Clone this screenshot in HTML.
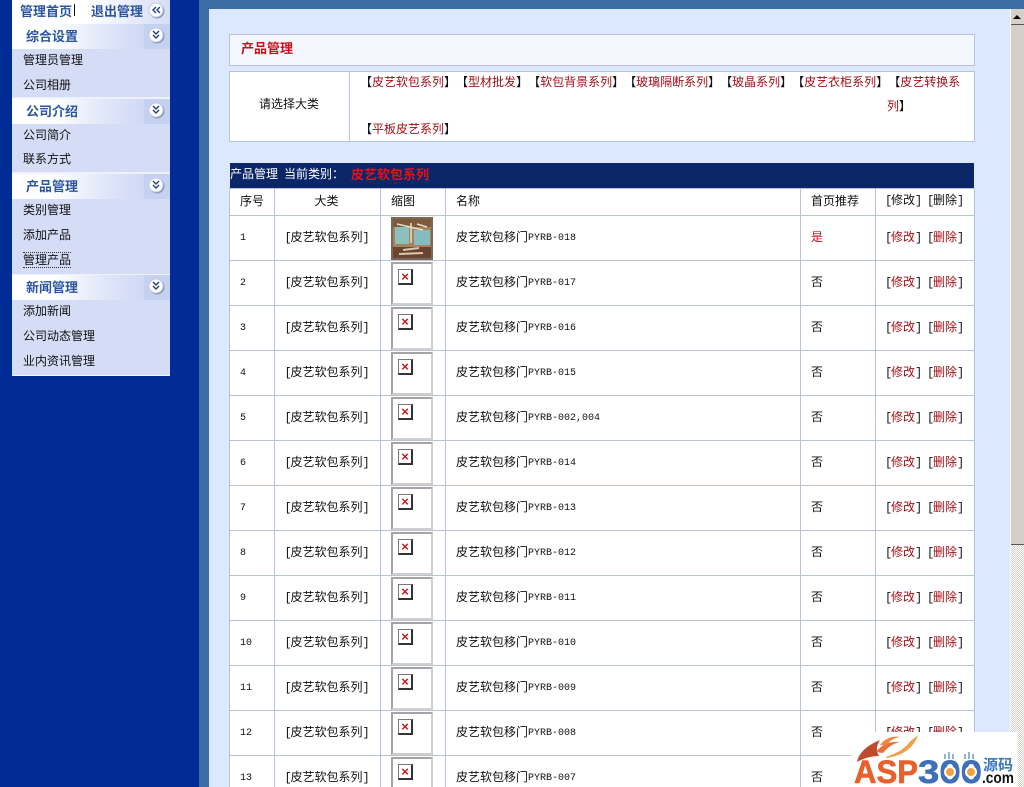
<!DOCTYPE html>
<html><head><meta charset="utf-8">
<style>
html,body{margin:0;padding:0;width:1024px;height:787px;overflow:hidden;background:#012c95;}
body{position:relative;font:12px/14px "WenQuanYi Zen Hei","Noto Sans CJK SC",sans-serif;color:#111;text-spacing-trim:space-all;}
.a{position:absolute;white-space:nowrap;}
.r{color:#a01018;}
u{font:10px/14px "Liberation Mono",monospace;text-decoration:none;white-space:pre;}
i{font:12px/14px "Liberation Mono",monospace;display:inline-block;width:6px;text-align:center;color:#111;}
.bd{font:bold 13px/15px "Noto Sans CJK SC",sans-serif;}
.h{position:absolute;left:12px;width:158px;height:25px;background:linear-gradient(90deg,#fff 0,#fff 40px,#dfe6f9 95px,#d5ddf6 120px,#cfd9f5 132px,#c5d1f1 132px,#c5d1f1 158px);}
.h b{position:absolute;left:14px;top:4px;font:bold 13px/15px "Noto Sans CJK SC",sans-serif;color:#2b569f;}
.h svg{position:absolute;left:136px;top:3px;}
.m{position:absolute;left:12px;width:158px;background:#d5ddf6;}
.m span{position:absolute;left:11px;white-space:nowrap;}
table{position:absolute;left:229px;top:188px;width:746px;table-layout:fixed;border-collapse:collapse;background:#fff;}
td{border:1px solid #b9c1dc;padding:0 0 2px 10px;height:42px;white-space:nowrap;overflow:hidden;}
tr.t td{height:24px;}
td.c{text-align:center;padding:0 2px 2px 0;}
td.p{padding:0;}
td:nth-child(6){padding-left:9px;}
tr:not(.t) td:nth-child(4),tr:not(.t) td:nth-child(6){padding-top:2px;padding-bottom:2px;height:40px;}
tr:not(.t) td:nth-child(4) u{position:relative;top:-1px;}
.th{position:relative;width:38px;height:39px;border:2px solid #cfcfcf;border-top-color:#a4a4a4;border-left-color:#a4a4a4;margin-left:10px;background:#fff;}
.x{position:absolute;left:5px;top:5px;width:12px;height:13px;border:1px solid #777;border-right:2px solid #333;border-bottom:2px solid #333;background:#fff;}
.x:after{content:"×";position:absolute;left:0;top:0;width:12px;text-align:center;color:#c4141c;font:bold 13px/13px "Liberation Sans",sans-serif;}
</style></head><body>

<div class="a" style="left:199px;top:0;width:825px;height:787px;background:#3a6ea5;"></div>
<div class="a" style="left:209px;top:9px;width:802px;height:778px;background:#dce8fd;"></div>
<div class="a" style="left:1010px;top:9px;width:1px;height:778px;background:#f4f6fa;"></div>

<!-- scrollbar -->
<div class="a" style="left:1011px;top:9px;width:13px;height:535px;background:#d4d0c8;"></div>
<div class="a" style="left:1011px;top:544px;width:13px;height:1px;background:#555;"></div>
<div class="a" style="left:1011px;top:545px;width:13px;height:242px;background:repeating-conic-gradient(#d4d0c8 0 25%,#fff 0 50%) 0 0/2px 2px;"></div>
<div class="a" style="left:1011px;top:9px;width:13px;height:15px;background:#d4d0c8;border-bottom:1px solid #555;"></div>
<div class="a" style="left:1013px;top:15px;width:0;height:0;border:4px solid transparent;border-top:0;border-bottom:4px solid #000;"></div>

<!-- sidebar -->
<div class="a" style="left:12px;top:0;width:158px;height:24px;background:linear-gradient(90deg,#fff 0,#fff 75px,#d5ddf6 158px);"></div>
<div class="a bd" style="left:20px;top:3px;color:#2b569f;">管理首页</div>
<div class="a" style="left:74px;top:4px;width:1px;height:12px;background:#111;"></div>
<div class="a bd" style="left:91px;top:3px;color:#2b569f;">退出管理</div>
<svg class="a" style="left:148px;top:2px;" width="18" height="18"><circle cx="9" cy="9" r="7.5" fill="#8c94ae"/><circle cx="8" cy="8" r="7" fill="#fff" stroke="#c3cbe2"/><path d="M8 5L5 8L8 11M12 5L9 8L12 11" fill="none" stroke="#23407f" stroke-width="1.4"/></svg>

<div class="h" style="top:24px;"><b>综合设置</b><svg width="18" height="18"><circle cx="9" cy="9" r="7.5" fill="#8c94ae"/><circle cx="8" cy="8" r="7" fill="#fff" stroke="#c3cbe2"/><path d="M5 4L8 7L11 4M5 8L8 11L11 8" fill="none" stroke="#23407f" stroke-width="1.4"/></svg></div>
<div class="m" style="top:49px;height:48px;"><span style="top:4px;">管理员管理</span><span style="top:29px;">公司相册</span></div>
<div class="a" style="left:12px;top:97px;width:158px;height:2px;background:#eef2fc;"></div>
<div class="h" style="top:99px;"><b>公司介绍</b><svg width="18" height="18"><circle cx="9" cy="9" r="7.5" fill="#8c94ae"/><circle cx="8" cy="8" r="7" fill="#fff" stroke="#c3cbe2"/><path d="M5 4L8 7L11 4M5 8L8 11L11 8" fill="none" stroke="#23407f" stroke-width="1.4"/></svg></div>
<div class="m" style="top:124px;height:48px;"><span style="top:4px;">公司简介</span><span style="top:28px;">联系方式</span></div>
<div class="a" style="left:12px;top:172px;width:158px;height:2px;background:#eef2fc;"></div>
<div class="h" style="top:174px;"><b>产品管理</b><svg width="18" height="18"><circle cx="9" cy="9" r="7.5" fill="#8c94ae"/><circle cx="8" cy="8" r="7" fill="#fff" stroke="#c3cbe2"/><path d="M5 4L8 7L11 4M5 8L8 11L11 8" fill="none" stroke="#23407f" stroke-width="1.4"/></svg></div>
<div class="m" style="top:199px;height:75px;"><span style="top:4px;">类别管理</span><span style="top:29px;">添加产品</span><span style="top:54px;border-top:1px dotted #333;border-bottom:1px dotted #333;margin-top:-1px;">管理产品</span></div>
<div class="a" style="left:12px;top:274px;width:158px;height:1px;background:#eef2fc;"></div>
<div class="h" style="top:275px;"><b>新闻管理</b><svg width="18" height="18"><circle cx="9" cy="9" r="7.5" fill="#8c94ae"/><circle cx="8" cy="8" r="7" fill="#fff" stroke="#c3cbe2"/><path d="M5 4L8 7L11 4M5 8L8 11L11 8" fill="none" stroke="#23407f" stroke-width="1.4"/></svg></div>
<div class="m" style="top:300px;height:75px;"><span style="top:4px;">添加新闻</span><span style="top:29px;">公司动态管理</span><span style="top:54px;">业内资讯管理</span></div>
<div class="a" style="left:12px;top:375px;width:158px;height:1px;background:#f2f5fd;"></div>

<!-- title -->
<div class="a" style="left:229px;top:34px;width:744px;height:30px;background:#f5f7fe;border:1px solid #b9c1dc;"></div>
<div class="a bd" style="left:241px;top:40px;color:#c8101a;">产品管理</div>

<!-- category box -->
<div class="a" style="left:229px;top:71px;width:744px;height:69px;background:#fff;border:1px solid #b9c1dc;"></div>
<div class="a" style="left:349px;top:72px;width:1px;height:69px;background:#b9c1dc;"></div>
<div class="a" style="left:259px;top:97px;">请选择大类</div>
<div class="a" style="left:360px;top:75px;">【<span class="r">皮艺软包系列</span>】【<span class="r">型材批发</span>】【<span class="r">软包背景系列</span>】【<span class="r">玻璃隔断系列</span>】【<span class="r">玻晶系列</span>】【<span class="r">皮艺衣柜系列</span>】【<span class="r">皮艺转换系</span></div>
<div class="a" style="left:887px;top:99px;"><span class="r">列</span>】</div>
<div class="a" style="left:360px;top:122px;">【<span class="r">平板皮艺系列</span>】</div>

<!-- dark bar -->
<div class="a" style="left:230px;top:163px;width:744px;height:25px;background:#0b2669;"></div>
<div class="a" style="left:230px;top:167px;color:#fff;">产品管理<u> </u>当前类别：</div>
<div class="a bd" style="left:351px;top:166px;color:#e01218;">皮艺软包系列</div>

<table>
<colgroup><col style="width:45px"><col style="width:106px"><col style="width:65px"><col style="width:355px"><col style="width:75px"><col style="width:99px"></colgroup>
<tr class="t"><td>序号</td><td class="c">大类</td><td>缩图</td><td>名称</td><td>首页推荐</td><td><i>[</i>修改<i>]</i><u> </u><i>[</i>删除<i>]</i></td></tr>
<tr><td><u>1</u></td><td class="c"><i>[</i>皮艺软包系列<i>]</i></td><td class="p"><div class="th" style="border-color:#7a6a55;overflow:hidden;"><svg width="38" height="39" style="display:block"><rect width="38" height="39" fill="#a6835e"/><rect width="38" height="8" fill="#7d5a3c"/><rect x="2" y="8" width="14" height="17" fill="#8cc0bc"/><rect x="21" y="11" width="16" height="15" fill="#86bcc0"/><path d="M4 5L30 11M18 4V24M24 5L34 8" stroke="#e6dcc8" stroke-width="1.5"/><rect y="28" width="38" height="11" fill="#6a4630"/><path d="M10 31L26 29M6 35L30 34" stroke="#d8c8b0" stroke-width="2"/></svg></div></td><td>皮艺软包移门<u>PYRB-018</u></td><td style="color:#c8101a">是</td><td><i>[</i><span class="r">修改</span><i>]</i><u> </u><i>[</i><span class="r">删除</span><i>]</i></td></tr>
<tr><td><u>2</u></td><td class="c"><i>[</i>皮艺软包系列<i>]</i></td><td class="p"><div class="th"><div class="x"></div></div></td><td>皮艺软包移门<u>PYRB-017</u></td><td>否</td><td><i>[</i><span class="r">修改</span><i>]</i><u> </u><i>[</i><span class="r">删除</span><i>]</i></td></tr>
<tr><td><u>3</u></td><td class="c"><i>[</i>皮艺软包系列<i>]</i></td><td class="p"><div class="th"><div class="x"></div></div></td><td>皮艺软包移门<u>PYRB-016</u></td><td>否</td><td><i>[</i><span class="r">修改</span><i>]</i><u> </u><i>[</i><span class="r">删除</span><i>]</i></td></tr>
<tr><td><u>4</u></td><td class="c"><i>[</i>皮艺软包系列<i>]</i></td><td class="p"><div class="th"><div class="x"></div></div></td><td>皮艺软包移门<u>PYRB-015</u></td><td>否</td><td><i>[</i><span class="r">修改</span><i>]</i><u> </u><i>[</i><span class="r">删除</span><i>]</i></td></tr>
<tr><td><u>5</u></td><td class="c"><i>[</i>皮艺软包系列<i>]</i></td><td class="p"><div class="th"><div class="x"></div></div></td><td>皮艺软包移门<u>PYRB-002,004</u></td><td>否</td><td><i>[</i><span class="r">修改</span><i>]</i><u> </u><i>[</i><span class="r">删除</span><i>]</i></td></tr>
<tr><td><u>6</u></td><td class="c"><i>[</i>皮艺软包系列<i>]</i></td><td class="p"><div class="th"><div class="x"></div></div></td><td>皮艺软包移门<u>PYRB-014</u></td><td>否</td><td><i>[</i><span class="r">修改</span><i>]</i><u> </u><i>[</i><span class="r">删除</span><i>]</i></td></tr>
<tr><td><u>7</u></td><td class="c"><i>[</i>皮艺软包系列<i>]</i></td><td class="p"><div class="th"><div class="x"></div></div></td><td>皮艺软包移门<u>PYRB-013</u></td><td>否</td><td><i>[</i><span class="r">修改</span><i>]</i><u> </u><i>[</i><span class="r">删除</span><i>]</i></td></tr>
<tr><td><u>8</u></td><td class="c"><i>[</i>皮艺软包系列<i>]</i></td><td class="p"><div class="th"><div class="x"></div></div></td><td>皮艺软包移门<u>PYRB-012</u></td><td>否</td><td><i>[</i><span class="r">修改</span><i>]</i><u> </u><i>[</i><span class="r">删除</span><i>]</i></td></tr>
<tr><td><u>9</u></td><td class="c"><i>[</i>皮艺软包系列<i>]</i></td><td class="p"><div class="th"><div class="x"></div></div></td><td>皮艺软包移门<u>PYRB-011</u></td><td>否</td><td><i>[</i><span class="r">修改</span><i>]</i><u> </u><i>[</i><span class="r">删除</span><i>]</i></td></tr>
<tr><td><u>10</u></td><td class="c"><i>[</i>皮艺软包系列<i>]</i></td><td class="p"><div class="th"><div class="x"></div></div></td><td>皮艺软包移门<u>PYRB-010</u></td><td>否</td><td><i>[</i><span class="r">修改</span><i>]</i><u> </u><i>[</i><span class="r">删除</span><i>]</i></td></tr>
<tr><td><u>11</u></td><td class="c"><i>[</i>皮艺软包系列<i>]</i></td><td class="p"><div class="th"><div class="x"></div></div></td><td>皮艺软包移门<u>PYRB-009</u></td><td>否</td><td><i>[</i><span class="r">修改</span><i>]</i><u> </u><i>[</i><span class="r">删除</span><i>]</i></td></tr>
<tr><td><u>12</u></td><td class="c"><i>[</i>皮艺软包系列<i>]</i></td><td class="p"><div class="th"><div class="x"></div></div></td><td>皮艺软包移门<u>PYRB-008</u></td><td>否</td><td><i>[</i><span class="r">修改</span><i>]</i><u> </u><i>[</i><span class="r">删除</span><i>]</i></td></tr>
<tr><td><u>13</u></td><td class="c"><i>[</i>皮艺软包系列<i>]</i></td><td class="p"><div class="th"><div class="x"></div></div></td><td>皮艺软包移门<u>PYRB-007</u></td><td>否</td><td><i>[</i><span class="r">修改</span><i>]</i><u> </u><i>[</i><span class="r">删除</span><i>]</i></td></tr>
</table>

<!-- logo -->
<svg class="a" style="left:850px;top:732px;" width="174" height="55" viewBox="0 0 174 55">
<rect x="1" y="0" width="167" height="55" fill="#fff"/>
<path d="M7 30C9 20 18 13 30 8C26 14 26 19 29 24C22 24 14 26 7 30Z" fill="#c04a2c"/>
<path d="M26 20C32 12 40 9 50 10C44 11 38 15 33 21Z" fill="#e8703a"/>
<path d="M30 13C36 5 44 4 50 5C44 6 40 9 36 13Z" fill="#ee8a40"/>
<path d="M36 25C44 22 52 19 58 12C62 7 66 5 68 3C66 9 62 15 56 19C50 23 44 25 36 26Z" fill="#f0a04a"/>
<g font-family="'Liberation Sans',sans-serif" font-weight="bold">
<text x="4" y="51" font-size="32" fill="#e8602c" stroke="#e8602c" stroke-width=".6" textLength="64" lengthAdjust="spacingAndGlyphs">ASP</text>
<text x="68" y="51" font-size="32" fill="#3f6fb8" stroke="#3f6fb8" stroke-width=".6" textLength="64" lengthAdjust="spacingAndGlyphs">300</text>
<text x="132" y="51" font-size="16" fill="#111" textLength="32" lengthAdjust="spacingAndGlyphs">.com</text>
</g>
<circle cx="100" cy="40" r="6" fill="#fff"/><circle cx="121" cy="40" r="6" fill="#fff"/>
<circle cx="100" cy="40" r="4" fill="#f2a040"/><circle cx="121" cy="40" r="4" fill="#f2a040"/>
<path d="M95 27V22M99 27V20M103 27V22M115 27V22M119 27V20M123 27V22" stroke="#6a98c8" stroke-width="1.5" fill="none"/>
<text x="133" y="38" font-family="'Noto Sans CJK SC',sans-serif" font-weight="bold" font-size="15" fill="#3a78bd">源码</text>
</svg>

</body></html>
